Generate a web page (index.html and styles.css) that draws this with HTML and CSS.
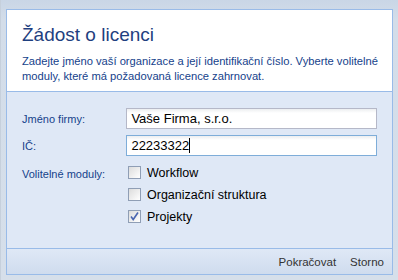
FILE: index.html
```html
<!DOCTYPE html>
<html lang="cs">
<head>
<meta charset="utf-8">
<link rel="stylesheet" href="styles.css">
</head>
<body>
<div class="frame">
  <div class="dialog">
    <div class="head">
      <h1 class="title">Žádost o licenci</h1>
      <p class="desc">Zadejte jméno vaší organizace a její identifikační číslo. Vyberte volitelné moduly, které má požadovaná licence zahrnovat.</p>
    </div>
    <div class="body">
      <div class="row">
        <label class="lbl">Jméno firmy:</label>
        <div class="field">Vaše Firma, s.r.o.</div>
      </div>
      <div class="row">
        <label class="lbl">IČ:</label>
        <div class="field focus">22233322<span class="caret"></span></div>
      </div>
      <div class="row mods">
        <label class="lbl">Volitelné moduly:</label>
        <div class="checks">
          <div class="chk"><span class="box"></span>Workflow</div>
          <div class="chk"><span class="box"></span>Organizační struktura</div>
          <div class="chk"><span class="box on"><svg width="11" height="11" viewBox="0 0 11 11"><path d="M2 5.5 L4.2 8.5 L9 1.5" fill="none" stroke="#4a66b0" stroke-width="1.6"/></svg></span>Projekty</div>
        </div>
      </div>
    </div>
    <div class="foot">
      <span class="btn">Pokračovat</span>
      <span class="btn">Storno</span>
    </div>
  </div>
</div>
</body>
</html>
```
FILE: styles.css
```css
html, body { margin: 0; padding: 0; }
body {
  width: 398px; height: 280px; overflow: hidden;
  background: #d6dfea;
  font-family: "Liberation Sans", Arial, sans-serif;
}
.frame {
  padding: 9px 5px 5px 5px;
  background: linear-gradient(#c9d6e6, #d3dde9 20px, #d6dfea);
  border-left: 1px solid #c6d0dc;
  height: 266px;
}
.dialog {
  border: 1px solid #99bbe8;
  display: flex; flex-direction: column;
  height: 264px;
}
.head {
  background: #fff;
  border-bottom: 1px solid #99bbe8;
  padding: 14px 14px 0 15px;
  height: 67px;
}
.title {
  margin: 0;
  font-weight: normal;
  font-size: 19px;
  color: #1f3f7f;
  line-height: 22px;
}
.desc {
  margin: 8px 0 0 0;
  font-size: 11.2px;
  line-height: 15px;
  color: #15428b;
}
.body {
  background: #dfe8f6;
  flex: 1;
  padding: 16px 15px 0 15px;
  border-bottom: 1px solid #99bbe8;
}
.row { display: flex; align-items: center; margin-bottom: 6px; }
.lbl {
  width: 105px;
  font-size: 11px;
  color: #15428b;
}
.field {
  width: 246px; height: 19px;
  border: 1px solid #b5b8c8;
  background: linear-gradient(#eceef0, #fff 4px);
  font-size: 13px; line-height: 19px;
  padding-left: 4px;
  color: #000;
  box-sizing: content-box;
}
.field.focus { border-color: #7eadd9; }
.caret { display: inline-block; width: 1px; height: 15px; background: #000; vertical-align: -3px; }
.mods { align-items: flex-start; margin-top: 10px; }
.mods .lbl { margin-top: 2px; }
.checks { display: flex; flex-direction: column; gap: 9px; }
.chk { display: flex; align-items: center; font-size: 12.5px; color: #000; height: 13px; }
.box {
  width: 11px; height: 11px;
  border: 1px solid #8f9eb5;
  background: linear-gradient(135deg, #dcdcdc, #fff);
  margin: 0 6px 0 1px;
  display: inline-flex;
}
.foot {
  height: 25px;
  background: linear-gradient(#dfe8f6, #cfdcee);
  display: flex; justify-content: flex-end; align-items: center;
  padding-right: 8px; gap: 14px;
}
.btn { font-size: 11.5px; color: #333; }
```
